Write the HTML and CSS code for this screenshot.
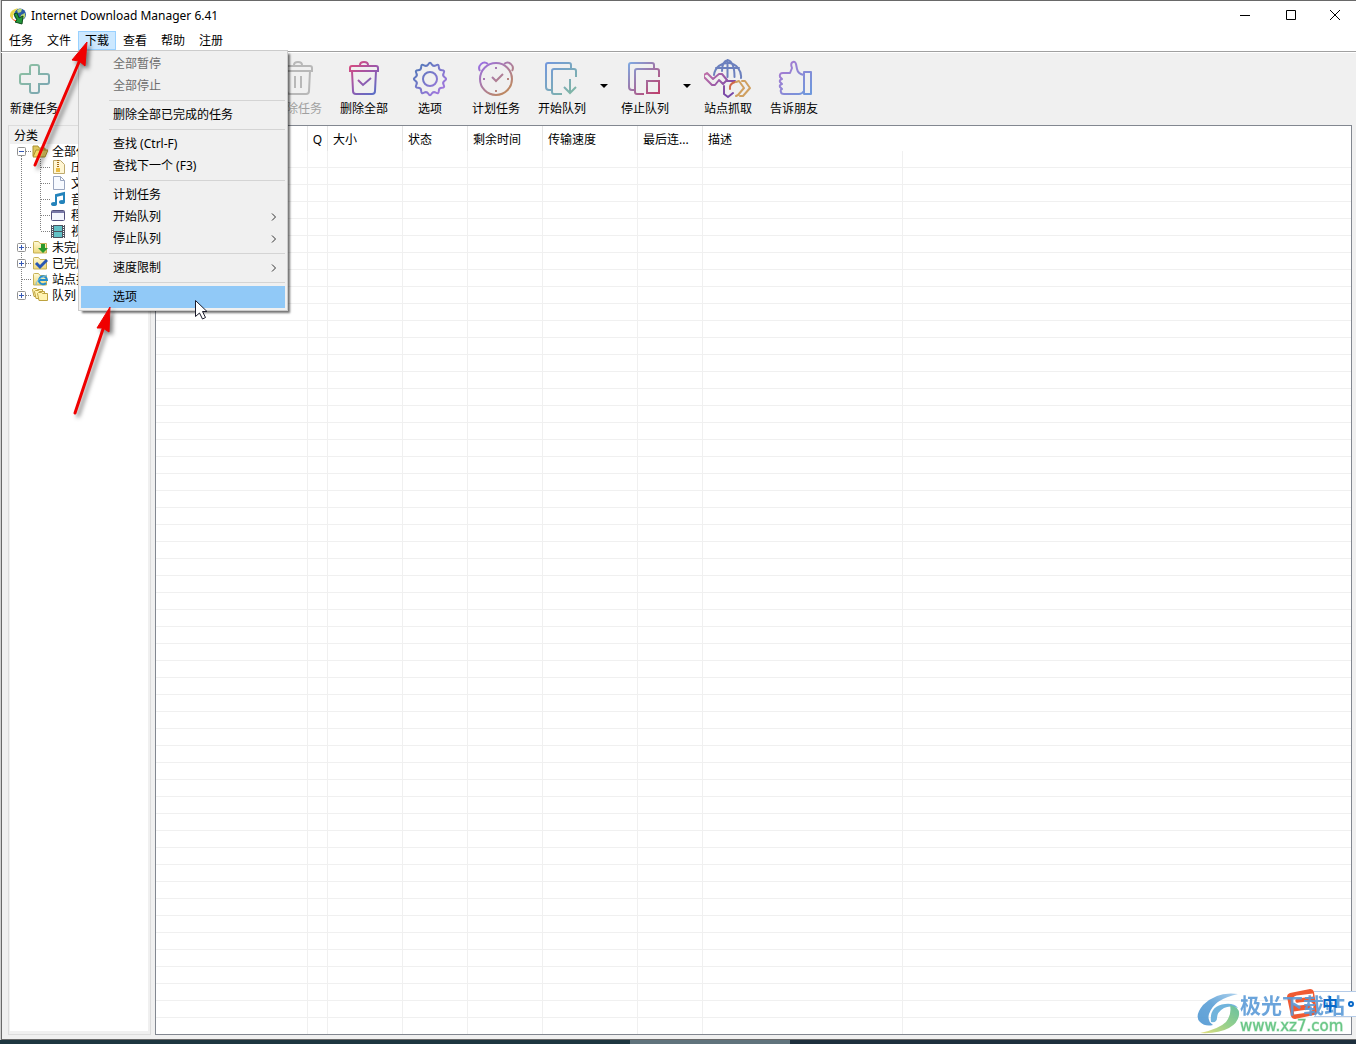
FILE: index.html
```html
<!DOCTYPE html>
<html lang="zh-CN">
<head>
<meta charset="utf-8">
<title>Internet Download Manager 6.41</title>
<link rel="stylesheet" href="styles.css">
</head>
<body>
<svg class="defs" aria-hidden="true">
  <defs>
    <linearGradient id="g-green" x1="0" y1="0" x2="1" y2="1"><stop offset="0" stop-color="#8fc3a0"/><stop offset="1" stop-color="#79a3b4"/></linearGradient>
    <linearGradient id="g-rose" gradientUnits="userSpaceOnUse" x1="6" y1="4" x2="32" y2="35"><stop offset="0" stop-color="#dc4a7c"/><stop offset=".5" stop-color="#9a58ac"/><stop offset="1" stop-color="#5870c8"/></linearGradient>
    <linearGradient id="g-gear" gradientUnits="userSpaceOnUse" x1="6" y1="6" x2="34" y2="34"><stop offset="0" stop-color="#5078b8"/><stop offset="1" stop-color="#a878e0"/></linearGradient>
    <linearGradient id="g-clock" gradientUnits="userSpaceOnUse" x1="6" y1="4" x2="32" y2="35"><stop offset="0" stop-color="#9a70e0"/><stop offset="1" stop-color="#c08a58"/></linearGradient>
    <linearGradient id="g-start" gradientUnits="userSpaceOnUse" x1="4" y1="4" x2="34" y2="36"><stop offset="0" stop-color="#7398dc"/><stop offset="1" stop-color="#80b8a0"/></linearGradient>
    <linearGradient id="g-stop" gradientUnits="userSpaceOnUse" x1="4" y1="4" x2="34" y2="36"><stop offset="0" stop-color="#80a8e0"/><stop offset="1" stop-color="#c03c68"/></linearGradient>
    <linearGradient id="g-thumb" gradientUnits="userSpaceOnUse" x1="8" y1="6" x2="36" y2="32"><stop offset="0" stop-color="#a878d0"/><stop offset="1" stop-color="#7098dc"/></linearGradient>
    <linearGradient id="g-link" gradientUnits="userSpaceOnUse" x1="0" y1="15" x2="22" y2="36"><stop offset="0" stop-color="#c070a8"/><stop offset="1" stop-color="#7848a8"/></linearGradient>
    <linearGradient id="g-folder" x1="0" y1="0" x2="0" y2="1"><stop offset="0" stop-color="#fffbd8"/><stop offset="1" stop-color="#ecd779"/></linearGradient>
    <linearGradient id="g-swirl" x1="1" y1="0" x2="0" y2="1"><stop offset="0" stop-color="#a5cdec"/><stop offset=".5" stop-color="#5a9fd6"/><stop offset="1" stop-color="#4f97d2"/></linearGradient>
    <linearGradient id="g-leaf" x1="0" y1="1" x2="1" y2="0"><stop offset="0" stop-color="#e2dc70"/><stop offset=".5" stop-color="#8acb80"/><stop offset="1" stop-color="#58ba98"/></linearGradient>
    <symbol id="folder" viewBox="0 0 16 16"><path d="M1.500 3.500q0-1 1-1h4l1.500 2h6.500v9.500h-13z" fill="url(#g-folder)" stroke="#c7b155"/></symbol>
    <symbol id="node-mid" viewBox="0 0 22 16"><path d="M11.500 0v16M12 8.500h10" stroke="#808080" stroke-dasharray="1 1" fill="none"/></symbol>
    <symbol id="plus-mid" viewBox="0 0 22 16"><path d="M11.500 0v16M12 8.500h10" stroke="#808080" stroke-dasharray="1 1" fill="none"/><rect x="7.500" y="4.500" width="8" height="8" rx="1" fill="#fff" stroke="#919191"/><path d="M9 8.500h5M11.500 6v5" stroke="#3659b5"/></symbol>
    <symbol id="plus-end" viewBox="0 0 22 16"><path d="M11.500 0v8M12 8.500h10" stroke="#808080" stroke-dasharray="1 1" fill="none"/><rect x="7.500" y="4.500" width="8" height="8" rx="1" fill="#fff" stroke="#919191"/><path d="M9 8.500h5M11.500 6v5" stroke="#3659b5"/></symbol>
    <symbol id="minus-top" viewBox="0 0 22 16"><path d="M11.500 9v7M12 8.500h10" stroke="#808080" stroke-dasharray="1 1" fill="none"/><rect x="7.500" y="4.500" width="8" height="8" rx="1" fill="#fff" stroke="#919191"/><path d="M9 8.500h5" stroke="#3659b5"/></symbol>
    <symbol id="child-mid" viewBox="0 0 41 16"><path d="M11.500 0v16M30.500 0v16M31 8.500h10" stroke="#808080" stroke-dasharray="1 1" fill="none"/></symbol>
    <symbol id="child-end" viewBox="0 0 41 16"><path d="M11.500 0v16M30.500 0v8M31 8.500h10" stroke="#808080" stroke-dasharray="1 1" fill="none"/></symbol>
    <symbol id="trash" viewBox="0 0 40 40"><path d="M8 7h24q2 0 2 2v3H6V9q0-2 2-2zM8 12l1 20q0 3 3 3h16q3 0 3-3l1-20M16 6q0-3 4-3t4 3" fill="none" stroke-width="2"/></symbol>
  </defs>
</svg>

<div class="window">
  <header class="titlebar">
    <svg class="app-icon" width="18" height="18" viewBox="0 0 18 18">
      <circle cx="11" cy="7.500" r="6" fill="#2a5ca8"/><path d="M8 3q3-2 5-1l-1 3-3 1zM12 8l4-2v4l-3 3-2-2z" fill="#b9d778"/>
      <path d="M9 1q-8 2-8 7 0 3 3 4-1-5 5-11z" fill="#e9d74c"/><path d="M1 7q1 7 9 6l1 2Q3 16 1 7z" fill="#e76e33"/>
      <path d="M5 7l3-1 2 5 4-2-1 8-7-2 2-2z" fill="#24973a" stroke="#0f4a1a"/>
    </svg>
    <h1 class="title">Internet Download Manager 6.41</h1>
    <div class="controls">
      <button class="control" aria-label="最小化"><svg width="12" height="12"><path d="M1 6.500h10" stroke="#000"/></svg></button>
      <button class="control" aria-label="最大化"><svg width="12" height="12"><path d="M1.500 1.500h9v9h-9z" fill="none" stroke="#000"/></svg></button>
      <button class="control" aria-label="关闭"><svg width="12" height="12"><path d="M1 1l10 10M11 1L1 11" stroke="#000"/></svg></button>
    </div>
  </header>

  <nav class="menubar">
    <button class="menu-title">任务</button>
    <button class="menu-title">文件</button>
    <div class="menu-host">
      <button class="menu-title open">下载</button>
      <div class="menu">
        <button class="item" disabled>全部暂停</button>
        <button class="item" disabled>全部停止</button>
        <hr class="sep">
        <button class="item">删除全部已完成的任务</button>
        <hr class="sep">
        <button class="item">查找 (Ctrl-F)</button>
        <button class="item">查找下一个 (F3)</button>
        <hr class="sep">
        <button class="item">计划任务</button>
        <button class="item">开始队列<svg class="chev" width="6" height="8"><path d="M1 .5l3.500 3.500L1 7.500" fill="none" stroke="#333"/></svg></button>
        <button class="item">停止队列<svg class="chev" width="6" height="8"><path d="M1 .5l3.500 3.500L1 7.500" fill="none" stroke="#333"/></svg></button>
        <hr class="sep">
        <button class="item">速度限制<svg class="chev" width="6" height="8"><path d="M1 .5l3.500 3.500L1 7.500" fill="none" stroke="#333"/></svg></button>
        <hr class="sep">
        <button class="item active">选项</button>
      </div>
    </div>
    <button class="menu-title">查看</button>
    <button class="menu-title">帮助</button>
    <button class="menu-title">注册</button>
  </nav>

  <div class="toolbar">
    <button class="tool"><svg width="40" height="40" viewBox="0 0 40 40"><path d="M18 6h5q2 0 2 2v7h8q2 0 2 2v6q0 2-2 2h-8v7q0 2-2 2h-5q-2 0-2-2v-7H8q-2 0-2-2v-6q0-2 2-2h8V8q0-2 2-2z" fill="none" stroke="url(#g-green)" stroke-width="2"/></svg>新建任务</button>
    <button class="tool" disabled><svg width="40" height="40" viewBox="0 0 40 40"><path d="M12 6l20 14-20 14z" fill="none" stroke="#bbb" stroke-width="2"/></svg>继续</button>
    <button class="tool" disabled><svg width="40" height="40" viewBox="0 0 40 40"><path d="M8 8h24v24H8z" fill="none" stroke="#bbb" stroke-width="2"/></svg>停止</button>
    <button class="tool" disabled><svg width="40" height="40" viewBox="0 0 40 40"><path d="M8 8h24v24H8z" fill="none" stroke="#bbb" stroke-width="2"/></svg>全部停止</button>
    <button class="tool" disabled><svg width="40" height="40" viewBox="0 0 40 40" stroke="#b8b8b8"><use href="#trash"/><path d="M17 17v12M23 17v12" stroke-width="2"/></svg>删除任务</button>
    <button class="tool"><svg width="40" height="40" viewBox="0 0 40 40" stroke="url(#g-rose)"><use href="#trash"/><path d="M14 21l5 5 8-7" fill="none" stroke-width="2"/></svg>删除全部</button>
    <button class="tool"><svg width="40" height="40" viewBox="0 0 40 40"><g fill="none" stroke="url(#g-gear)" stroke-width="2"><circle cx="20" cy="20" r="7"/><path d="M18.400 5.200Q20 2.500 21.600 5.200Q23.200 7.900 26 6.300Q28.800 4.800 28.800 8Q28.800 11.200 32 11.200Q35.200 11.200 33.700 14Q32.100 16.800 34.800 18.400Q37.500 20 34.800 21.600Q32.100 23.200 33.700 26Q35.200 28.800 32 28.800Q28.800 28.800 28.800 32Q28.800 35.200 26 33.700Q23.200 32.100 21.600 34.800Q20 37.500 18.400 34.800Q16.800 32.100 14 33.700Q11.200 35.200 11.200 32Q11.200 28.800 8 28.800Q4.800 28.800 6.300 26Q7.900 23.200 5.200 21.600Q2.500 20 5.200 18.400Q7.900 16.800 6.300 14Q4.800 11.200 8 11.200Q11.200 11.200 11.200 8Q11.200 4.800 14 6.300Q16.800 7.900 18.400 5.200z"/></g></svg>选项</button>
    <button class="tool"><svg width="40" height="40" viewBox="0 0 40 40"><g fill="none" stroke="url(#g-clock)" stroke-width="2"><circle cx="20" cy="20" r="16"/><path d="M4 12c-3-5 3-11 8-7M36 12c3-5-3-11-8-7M16 18l4 4 7-7M20 8v2M20 31v2M7 20h2M31 20h2"/></g></svg>计划任务</button>
    <button class="tool"><svg width="40" height="40" viewBox="0 0 40 40"><g fill="none" stroke="url(#g-start)" stroke-width="2"><path d="M29 9V6q0-2-2-2H6q-2 0-2 2v22q0 3 3 3h2M34 18v-6q0-2-2-2H12q-2 0-2 2v21q0 2 2 2h8M28 20v14M22 28l6 6 6-6"/></g></svg>开始队列</button>
    <button class="drop" aria-label="开始队列选项"></button>
    <button class="tool"><svg width="40" height="40" viewBox="0 0 40 40"><g fill="none" stroke="url(#g-stop)" stroke-width="2"><path d="M29 9V6q0-2-2-2H6q-2 0-2 2v22q0 3 3 3h2M34 18v-6q0-2-2-2H12q-2 0-2 2v21q0 2 2 2h7M22 22h12v12H22z"/></g></svg>停止队列</button>
    <button class="drop" aria-label="停止队列选项"></button>
    <button class="tool"><svg width="48" height="40" viewBox="0 0 48 40"><g fill="none" stroke-width="2" stroke-linejoin="round" stroke-linecap="round"><path d="M10 16a13.500 13.500 0 1 1 27 3M18 12c0-6 2-10 5.500-11 4 1 7 6 7 17M23.500 1v17M12 9h23" stroke="#6c80be"/><path d="M0 16l3-2 6 6 6-5h3l5 6-4 4-4-4-4 5H8l-8-8zM22 22h9M20 27v8l4 3 5-4" stroke="url(#g-link)"/><path d="M26 30q-1-5 5-7" stroke="#d06848"/><path d="M32 23l3-1 5 7-6 7-2 1M38 22h3l5 7-7 8h-3" stroke="#d0a060"/></g></svg>站点抓取</button>
    <button class="tool"><svg width="40" height="40" viewBox="0 0 40 40"><g fill="none" stroke="url(#g-thumb)" stroke-width="2" stroke-linejoin="round"><path d="M30 16q-6-1-7-6l-1-5q-1-3-3-2-3 1-1 6l-2 5H9q-4 0-3 4l2 2q-3 1-2 3l2 2q-3 1-2 3l2 2q-2 1-1 3 0 2 3 2h15q3 0 5-3M30 13h7v22h-7z"/></g></svg>告诉朋友</button>
  </div>

  <main class="workspace">
    <aside class="sidebar">
      <h2 class="side-title">分类</h2>
      <ul class="tree">
        <li class="node"><svg width="22" height="16"><use href="#minus-top"/></svg><svg width="16" height="16" viewBox="0 0 16 16"><path d="M1 13V3h5l1 2h6v2" fill="#e0c75d" stroke="#aa9130"/><path d="M1 14l3-7h12l-3 7z" fill="#f1d868" stroke="#aa9130"/></svg><span class="label">全部任务</span></li>
        <li class="node"><svg width="41" height="16"><use href="#child-mid"/></svg><svg width="16" height="16"><path d="M2.500 1.500h7l4 4v9h-11z" fill="#fff6d4" stroke="#bea96c"/><path d="M7 1v9" stroke="#a46a19" stroke-width="2" stroke-dasharray="1 1"/><path d="M5 9h4v4H5z" fill="#ebbc43"/></svg><span class="label">压缩文件</span></li>
        <li class="node"><svg width="41" height="16"><use href="#child-mid"/></svg><svg width="16" height="16"><path d="M2.500 1.500h7l4 4v9h-11zM9.500 1.500v4h4" fill="#f7faff" stroke="#99a5bf"/></svg><span class="label">文档</span></li>
        <li class="node"><svg width="41" height="16"><use href="#child-mid"/></svg><svg width="16" height="16"><path d="M5 13V4l8-2v9M5 5l8-2" fill="none" stroke="#2483bb" stroke-width="2"/><ellipse cx="3" cy="13" rx="3" ry="2" fill="#2483bb"/><ellipse cx="11" cy="11" rx="3" ry="2" fill="#2483bb"/></svg><span class="label">音乐</span></li>
        <li class="node"><svg width="41" height="16"><use href="#child-mid"/></svg><svg width="16" height="16"><rect x=".5" y="3.500" width="13" height="10" rx="1" fill="#f3f5fd" stroke="#53517d"/><path d="M1 5h12" stroke="#7878a8" stroke-width="2"/></svg><span class="label">程序</span></li>
        <li class="node"><svg width="41" height="16"><use href="#child-end"/></svg><svg width="16" height="16"><path d="M0 2h14v13H0z" fill="#4d5360"/><path d="M3 3h8v5H3zM3 9h8v5H3z" fill="#62c1c6"/><path d="M1.500 2v13M12.500 2v13" stroke="#fff" stroke-dasharray="1 1"/></svg><span class="label">视频</span></li>
        <li class="node"><svg width="22" height="16"><use href="#plus-mid"/></svg><svg width="16" height="16"><use href="#folder"/><path d="M9 5h4v4h3l-5 5-5-5h3z" fill="#29992d"/></svg><span class="label">未完成</span></li>
        <li class="node"><svg width="22" height="16"><use href="#plus-mid"/></svg><svg width="16" height="16"><use href="#folder"/><path d="M4 8l4 4 7-7" fill="none" stroke="#2757b5" stroke-width="3"/></svg><span class="label">已完成</span></li>
        <li class="node"><svg width="22" height="16"><use href="#node-mid"/></svg><svg width="16" height="16"><use href="#folder"/><path d="M14 12a4 4 0 1 1 1-3H7" fill="none" stroke="#258cca" stroke-width="2"/><path d="M4 14q-1-5 11-10" fill="none" stroke="#71bde7"/></svg><span class="label">站点抓取</span></li>
        <li class="node"><svg width="22" height="16"><use href="#plus-end"/></svg><svg width="16" height="16" viewBox="0 0 16 16"><g fill="#fff3b0" stroke="#bda23f"><path d="M.5 2.500l1-1h3l1 1h5v7H2z"/><path d="M2.500 4.500l1-1h3l1 1h5v7H4z"/><path d="M5.500 6.500l1-1h3l1 1h5v7H7z"/></g></svg><span class="label">队列</span></li>
      </ul>
    </aside>

    <section class="downloads">
      <table class="list">
        <colgroup><col class="w-name"><col class="w-q"><col class="w-75"><col class="w-65"><col class="w-75"><col class="w-95"><col class="w-65"><col class="w-200"><col></colgroup>
        <thead><tr><th>文件名</th><th class="q">Q</th><th>大小</th><th>状态</th><th>剩余时间</th><th>传输速度</th><th>最后连...</th><th class="last">描述</th><th class="last"></th></tr></thead>
        <tbody><tr><td></td><td></td><td></td><td></td><td></td><td></td><td></td><td></td><td></td></tr></tbody>
      </table>
    </section>
  </main>
</div>
<footer class="taskbar"></footer>

<svg class="pointers" width="230" height="430" aria-hidden="true">
  <g class="arrow"><path d="M35 165L79 62" stroke="#f00000" stroke-width="3" stroke-linecap="round"/><path d="M87 42L72 60l7 1 6 5z" fill="#f00000" stroke="#f00000"/></g>
  <g class="arrow"><path d="M75 413L103 329" stroke="#f00000" stroke-width="3" stroke-linecap="round"/><path d="M110 307L97 328l6 0 6 4z" fill="#f00000" stroke="#f00000"/></g>
  <path d="M195.500 300.500v16l4-3.500 3 6 3-1.500-3-6h4.500z" fill="#fff" stroke="#1a1a2a"/>
</svg>

<div class="ime">
  <svg class="ime-logo" width="32" height="32" viewBox="0 0 32 32"><path d="M4 5l20-4q3 0 4 3l3 20q0 3-3 3L9 31q-3 0-4-3L1 9q0-3 3-4z" fill="#f05a32"/><path d="M27 7L11 9q-4 1-3 5 1 3 5 2l9-1q4 0 4 3 0 4-4 5L8 25" fill="none" stroke="#fff" stroke-width="3"/></svg>
  <div class="ime-strip"><span class="ime-mode">中</span><svg width="6" height="6"><circle cx="3" cy="3" r="2" fill="#fff" stroke="#0868c8" stroke-width="2"/></svg></div>
</div>
<div class="watermark">
  <svg width="43" height="41" viewBox="0 0 43 41"><path d="M41 1Q20-2 6 12-3 23 3 29q5 5 13 3-6-4-4-11Q17 6 41 1z" fill="url(#g-swirl)"/><path d="M14 29q-2-16 14-18 9-1 13 4-8-3-14 0-7 4-7 10 0 5-6 4z" fill="#62acd9"/><path d="M33 12q10 2 9 10-1 8-10 13-11 6-29 5 19-4 26-11 6-8 4-17z" fill="url(#g-leaf)"/></svg>
  <div class="mark-text"><span class="mark-name">极光下载站</span><span class="mark-url">www.xz7.com</span></div>
</div>
</body>
</html>
```
FILE: styles.css
```css
* { box-sizing: border-box; }

body {
  position: relative;
  display: flex;
  flex-direction: column;
  min-height: 100vh;
  margin: 0;
  overflow: hidden;
  background: #d0d0d0;
  color: #000;
  font: 12px/16px "Noto Sans", "Noto Sans CJK SC", sans-serif;
}

button {
  margin: 0;
  padding: 0;
  border: 0;
  background: none;
  color: inherit;
  font: inherit;
}

svg { flex: none; display: block; }
.defs { position: absolute; width: 0; height: 0; }

.window {
  flex: 1;
  display: flex;
  flex-direction: column;
  margin-left: 1px;
  border: 1px solid #696969;
  border-right: 0;
  background: #f0f0f0;
}

/* Title bar */
.titlebar {
  display: flex;
  align-items: center;
  height: 30px;
  padding-left: 7px;
  background: #fff;
}
.title { margin: 0 0 0 4px; font-size: 12px; font-weight: 400; }
.controls { display: flex; align-self: flex-start; margin-left: auto; }
.control { display: flex; align-items: center; justify-content: center; width: 46px; height: 28px; }
.control:last-child { width: 42px; }

/* Menu bar and its open menu */
.menubar {
  display: flex;
  height: 21px;
  padding-bottom: 2px;
  border-bottom: 1px solid #a0a0a0;
  background: #fff;
}
.menu-title { width: 38px; height: 19px; border: 1px solid transparent; line-height: 16px; }
.menu-title.open { border-color: #99d1ff; background: #cce8ff; }
.menu-host { position: relative; }
.menu {
  position: absolute;
  z-index: 2;
  top: 19px;
  left: 0;
  width: 210px;
  padding: 2px;
  border: 1px solid #ccc;
  background: #f0f0f0;
  box-shadow: 3px 3px 2px -1px rgb(0 0 0 / 55%);
}
.item {
  display: flex;
  align-items: center;
  width: 100%;
  height: 22px;
  padding: 0 8px 0 32px;
}
.item:disabled { color: #6d6d6d; }
.item.active { background: #91c9f7; }
.chev { margin-left: auto; }
.sep { height: 1px; margin: 3px 0 3px 28px; border: 0; background: #d4d4d4; }

/* Toolbar */
.toolbar { display: flex; height: 73px; margin-left: -1px; border-top: 1px solid #fff; }
.tool {
  display: flex;
  flex-direction: column;
  align-items: center;
  width: 66px;
  padding-top: 6px;
  gap: 2px;
}
.tool:disabled { color: #a0a0a0; }
.drop { display: flex; align-items: center; justify-content: center; width: 17px; height: 66px; }
.drop::before { content: ""; border: 4px solid transparent; border-top-color: #000; border-bottom: 0; }

/* Category tree and download list */
.workspace { flex: 1; display: flex; gap: 4px; padding: 0 4px 4px 6px; }
.sidebar {
  display: flex;
  flex-direction: column;
  width: 143px;
  border: 1px solid #dcdcdc;
}
.side-title { margin: 0; padding-left: 5px; height: 18px; line-height: 20px; font-size: 12px; font-weight: 400; }
.tree {
  flex: 1;
  margin: 0 2px 3px 1px;
  padding: 0;
  background: #fff;
  list-style: none;
}
.node { display: flex; height: 16px; white-space: nowrap; }
.node svg { margin-top: -1px; }
.label { margin-left: 4px; }

.downloads { flex: 1; display: flex; min-width: 0; border: 1px solid #828790; background: #fff; }
.list { width: 100%; border-collapse: separate; border-spacing: 0; table-layout: fixed; }
.w-name { width: 152px; }
.w-q { width: 20px; }
.w-65 { width: 65px; }
.w-75 { width: 75px; }
.w-95 { width: 95px; }
.w-200 { width: 200px; }
.list th {
  height: 25px;
  padding: 2px 0 0 5px;
  overflow: hidden;
  border-right: 1px solid #e5e5e5;
  font-weight: 400;
  text-align: left;
  white-space: nowrap;
}
.list .q { padding-left: 0; text-align: center; }
.list .last { border-right: 0; }
.list td { padding: 0; border-right: 1px solid #f0f0f0; }
.list td:last-child { border-right: 0; }
.list tbody { background: repeating-linear-gradient(#fff 0 16px, #f0f0f0 16px 17px); }

.taskbar { height: 4px; background: linear-gradient(90deg, #1d3640 0 630px, #60737c 630px 790px, #1d2f3d 790px); }

/* Layers above the window */
.pointers { position: absolute; z-index: 3; top: 0; left: 0; pointer-events: none; }
.arrow { filter: drop-shadow(3px 3px 2px rgb(0 0 0 / 50%)); }

.watermark { position: absolute; right: 10px; bottom: 9px; display: flex; opacity: .9; }
.mark-text { display: flex; flex-direction: column; width: 106px; white-space: nowrap; }
.mark-name { color: #5b9bd8; font-size: 21px; line-height: 24px; font-weight: 700; }
.mark-url { color: #57c078; font: 15px/18px "DejaVu Sans", sans-serif; -webkit-text-stroke: 1px #57c07880; }
.ime { position: absolute; right: 0; bottom: 24px; display: flex; align-items: center; }
.ime-logo { position: relative; }
.ime-strip {
  display: flex;
  align-items: center;
  gap: 10px;
  height: 26px;
  margin-left: -4px;
  padding: 0 2px 0 8px;
  border: 1px solid #b4cbe8;
  border-width: 1px 0;
  background: #fff;
}
.ime-mode { position: relative; z-index: 1; color: #0868c8; font-size: 16px; font-weight: 700; }
```
